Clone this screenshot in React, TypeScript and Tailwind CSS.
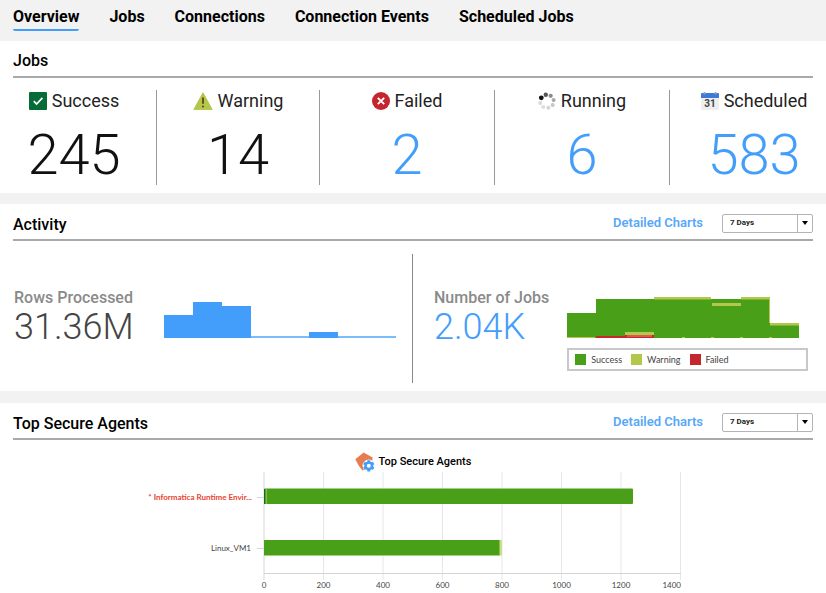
import type { ReactNode } from "react";

const tabs = ["Overview", "Jobs", "Connections", "Connection Events", "Scheduled Jobs"];

function SuccessIcon() {
  return (
    <svg width="18" height="18" viewBox="0 0 18 18" aria-hidden="true">
      <rect width="18" height="18" rx="1" fill="#056b37" />
      <path d="M4.8 9.2l2.8 2.9 5.8-6.2" fill="none" stroke="#fff" strokeWidth="1.7" />
    </svg>
  );
}

function WarningIcon() {
  return (
    <svg width="20" height="18" viewBox="0 0 20 18" aria-hidden="true">
      <path d="M10 .8L19.2 17.6H.8z" fill="#b3c74b" stroke="#b3c74b" strokeWidth="1" strokeLinejoin="round" />
      <path d="M10 5.5v6.2" stroke="#5f3a14" strokeWidth="1.7" />
      <circle cx="10" cy="14.6" r="1" fill="#5f3a14" />
    </svg>
  );
}

function FailedIcon() {
  return (
    <svg width="18" height="18" viewBox="0 0 18 18" aria-hidden="true">
      <circle cx="9" cy="9" r="9" fill="#c4262e" />
      <path d="M5.8 5.8l6.4 6.4M12.2 5.8l-6.4 6.4" stroke="#fff" strokeWidth="1.9" />
    </svg>
  );
}

function RunningIcon() {
  return (
    <svg width="18" height="18" viewBox="0 0 18 18" aria-hidden="true">
      <circle cx="3.3" cy="5.8" r="2.4" fill="#111" />
      <circle cx="7.8" cy="2.7" r="2.2" fill="#555" />
      <circle cx="12.7" cy="3.8" r="2.1" fill="#8a8a8a" />
      <circle cx="15.6" cy="8" r="2" fill="#a8a8a8" />
      <circle cx="14.7" cy="13" r="2" fill="#c6c6c6" />
      <circle cx="10.4" cy="15.8" r="2" fill="#d4d4d4" />
      <circle cx="5.2" cy="15" r="2" fill="#dedede" />
      <circle cx="2.2" cy="10.9" r="2" fill="#dadada" />
    </svg>
  );
}

function CalendarIcon() {
  return (
    <svg width="18" height="18" viewBox="0 0 18 18" aria-hidden="true">
      <rect y="1" width="18" height="17" rx="1" fill="#eeeeee" />
      <path d="M0 6V2q0-1 1-1h16q1 0 1 1v4z" fill="#3b7ad9" />
      <circle cx="3.5" cy="1.2" r="1.2" fill="#8f9fb8" />
      <circle cx="14.5" cy="1.2" r="1.2" fill="#8f9fb8" />
      <text x="9" y="15" textAnchor="middle" className="fill-[#444] font-['Roboto',sans-serif] text-[10px] font-bold">
        31
      </text>
    </svg>
  );
}

function AgentIcon() {
  return (
    <svg width="20" height="20" viewBox="0 0 20 20" aria-hidden="true">
      <path d="M.3 7.2L8.600.6l9 5-.8 7.400-9.400 5.600Q3.500 14 .3 7.200z" fill="#e67d52" />
      <circle cx="13.800" cy="13.800" r="6.200" fill="#fff" />
      <g fill="#429efa" stroke="#429efa">
        <circle cx="13.800" cy="13.800" r="4" />
        <path d="M13.800 8.200v11.200M8.950 11l9.700 5.600M18.650 11l-9.700 5.600" strokeWidth="3" />
      </g>
      <circle cx="13.800" cy="13.800" r="2" fill="#fff" />
    </svg>
  );
}

const stats = [
  { label: "Success", value: "245", icon: <SuccessIcon />, link: false },
  { label: "Warning", value: "14", icon: <WarningIcon />, link: false },
  { label: "Failed", value: "2", icon: <FailedIcon />, link: true },
  { label: "Running", value: "6", icon: <RunningIcon />, link: true },
  { label: "Scheduled", value: "583", icon: <CalendarIcon />, link: true },
];

function PeriodSelect({ label }: { label: string }) {
  return (
    <div className="relative h-[19px] w-[91px]">
      <select
        aria-label={label}
        defaultValue="7"
        className="block h-full w-full appearance-none rounded-xs border border-[#b4b4b8] bg-white pl-[7px] text-[8px] font-bold text-[#222]"
      >
        <option value="1">24 Hours</option>
        <option value="7">7 Days</option>
        <option value="30">30 Days</option>
      </select>
      <span className="pointer-events-none absolute inset-y-px right-px flex w-[15px] items-center justify-center border-l border-[#b4b4b8]">
        <svg width="6" height="4" viewBox="0 0 6 4" aria-hidden="true">
          <path d="M0 0h6L3 4z" fill="#000" />
        </svg>
      </span>
    </div>
  );
}

function SectionHeader({ title, charts }: { title: string; charts?: boolean }) {
  return (
    <div
      className={`mx-[13px] flex h-[37px] items-center justify-between border-b-2 border-[#a9a9a9] ${charts ? "pt-[3px]" : ""}`}
    >
      <h2 className="pt-1 text-[16px] font-medium text-black">{title}</h2>
      {charts && (
        <div className="flex items-center gap-[19px]">
          <a href="#charts" className="text-[13px] font-semibold text-[#58a8f8]">
            Detailed Charts
          </a>
          <PeriodSelect label={`${title} period`} />
        </div>
      )}
    </div>
  );
}

function Metric({ label, children }: { label: string; children: ReactNode }) {
  return (
    <div className="pt-[34px]">
      <div className="text-[16px] leading-[19px] font-medium whitespace-nowrap text-[#8a8a8a]">{label}</div>
      {children}
    </div>
  );
}

function RowsChart() {
  return (
    <svg width="232" height="42" viewBox="0 0 232 42" role="img" aria-label="Rows processed">
      <path d="M87 40h145v2H87z" fill="#7dbcfb" />
      <path d="M0 42V19h29V6h29v4h29v32zM145 42v-6h29v6z" fill="#429efa" />
    </svg>
  );
}

function JobsChart() {
  return (
    <svg width="232" height="42" viewBox="0 0 232 42" role="img" aria-label="Number of jobs">
      <path d="M0 42V17h29V3h174v25h29v14z" fill="#4a9f18" />
      <g fill="#b3c74b">
        <path d="M87 1h57v2.500H87zM145 7h29v3h-29zM174 1h29v2.500h-29zM203 27h29v2.500h-29zM58 36h29v3H58z" />
        <path d="M202 3h1v24h-1zM0 41h28v1H0zM115 41h3v1h-3zM144 41h3v1h-3zM173 41h3v1h-3zM202 41h3v1h-3z" />
      </g>
      <path d="M29 40h29v2H29zM58 39h29v3H58z" fill="#c8282c" />
      <path d="M60 40h25" stroke="#e88a7a" strokeWidth="1" />
    </svg>
  );
}

function Legend() {
  return (
    <ul className="mt-2.5 flex h-[23px] w-[241px] items-center gap-[9px] border-2 border-[#c8c8ca] px-1.5 font-['Lato',sans-serif] text-[9px] text-[#444]">
      <li className="flex items-center gap-[5px]">
        <span className="size-[11px] bg-[#4a9f18]" />
        Success
      </li>
      <li className="flex items-center gap-[5px]">
        <span className="size-[11px] bg-[#b3c74b]" />
        Warning
      </li>
      <li className="flex items-center gap-[5px]">
        <span className="size-[11px] bg-[#c4262e]" />
        Failed
      </li>
    </ul>
  );
}

const ticks = [0, 200, 400, 600, 800, 1000, 1200, 1400];

function AgentsChart() {
  const origin = 121;
  const step = 59.5;
  return (
    <svg
      width="540"
      height="120"
      viewBox="0 0 540 120"
      className="mx-auto max-w-full font-['Lato',sans-serif] text-[8px]"
      role="img"
      aria-label="Top secure agents"
    >
      {ticks.map((tick, i) => (
        <g key={tick}>
          <path d={`M${origin + i * step} 0v108`} stroke={i === 0 ? "#d2d6da" : "#e6e7e9"} />
          <text
            x={i === 7 ? 538 : origin + i * step}
            y="116"
            textAnchor={i === 7 ? "end" : "middle"}
            className="fill-[#444]"
          >
            {tick}
          </text>
        </g>
      ))}
      <path d="M121 101.500h417" stroke="#d2d6da" />
      <path d="M114 25.500h7M114 76.500h7" stroke="#d2d6da" />
      <rect x="121" y="16.500" width="369" height="15.500" rx="1" fill="#4a9f18" />
      <path d="M121 17h1.500v15H121z" fill="#056b37" />
      <path d="M122.500 17h1.500v15h-1.500z" fill="#8fb934" />
      <rect x="121" y="68" width="236" height="15.500" fill="#4a9f18" />
      <path d="M356.500 68h2.500v15.500h-2.500z" fill="#cddc86" />
      <text x="109" y="28" textAnchor="end" className="fill-[#e8432f] text-[8px] font-bold">
        * Informatica Runtime Envir...
      </text>
      <text x="108" y="79" textAnchor="end" className="fill-[#444]">
        Linux_VM1
      </text>
    </svg>
  );
}

export default function App() {
  return (
    <div className="min-h-screen overflow-hidden bg-white font-['Roboto',sans-serif] text-[#111]">
      <nav className="flex h-[41px] items-start gap-[30px] bg-[#f2f2f2] px-[13px] pt-[5px] text-[16px] font-bold whitespace-nowrap text-black">
        {tabs.map((tab, i) => (
          <a
            key={tab}
            href="#"
            className={i === 0 ? "rounded-xs border-b-2 border-[#429efa] leading-6" : "leading-6"}
          >
            {tab}
          </a>
        ))}
      </nav>

      <section className="h-[152px]">
        <SectionHeader title="Jobs" />
        <div className="grid grid-cols-[157fr_163fr_175fr_175fr_156fr] pt-3">
          {stats.map((stat, i) => (
            <div
              key={stat.label}
              className="flex h-[95px] flex-col items-center border-[#999] not-last:border-r first:pr-2 last:pl-3"
            >
              <div className="flex items-center gap-[5px] text-[18px] leading-[21px] text-[#222]">
                {stat.icon}
                {stat.label}
              </div>
              {stat.link ? (
                <a href={`#${stat.label.toLowerCase()}`} className="mt-3 text-[56px] leading-[64px] font-light text-[#429efa]">
                  {stat.value}
                </a>
              ) : (
                <span className="mt-3 text-[56px] leading-[64px] font-light">{stat.value}</span>
              )}
            </div>
          ))}
        </div>
      </section>

      <section className="h-[198px] border-t-[11px] border-[#f2f2f2]">
        <SectionHeader title="Activity" charts />
        <div className="grid grid-cols-2 pt-[13px]">
          <div className="flex h-[129px] gap-[30px] border-r border-[#888] pl-3.5">
            <Metric label="Rows Processed">
              <div className="text-[36px] leading-10 font-light text-[#444]">31.36M</div>
            </Metric>
            <div className="pt-[42px]">
              <RowsChart />
            </div>
          </div>
          <div className="flex gap-[18px] pl-[21px]">
            <Metric label="Number of Jobs">
              <a href="#jobs" className="block text-[36px] leading-10 font-light text-[#429efa]">
                2.04K
              </a>
            </Metric>
            <div className="pt-[42px]">
              <JobsChart />
              <Legend />
            </div>
          </div>
        </div>
      </section>

      <section className="border-t-[12px] border-[#f2f2f2]">
        <SectionHeader title="Top Secure Agents" charts />
        <div className="flex items-center justify-center gap-1 pt-3 text-[11px] leading-5 font-medium text-black">
          <AgentIcon />
          Top Secure Agents
        </div>
        <AgentsChart />
      </section>
    </div>
  );
}
